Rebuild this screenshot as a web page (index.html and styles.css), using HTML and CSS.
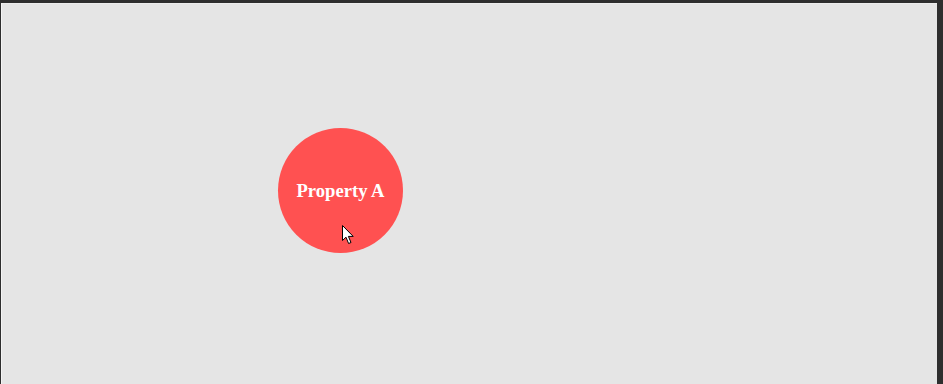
FILE: index.html
```html
<!DOCTYPE html>
<html lang="en">
<head>
    <meta charset="UTF-8">
    <title>Bubble</title>
    <link rel="stylesheet" href="styles.css">
</head>
<body>
    <div class="stage">
        <div class="node">
            <span>Property A</span>
        </div>
        <!-- mouse pointer -->
        <svg class="pointer" width="13" height="20" viewBox="0 0 13 20">
            <path d="M0.5 0.5 L0.5 15.5 L4 12.2 L6.6 18.5 L9 17.5 L6.4 11.4 L11.2 11.4 Z" fill="#fff" stroke="#000" stroke-width="1" stroke-linejoin="round"/>
        </svg>
    </div>
</body>
</html>
```

FILE: styles.css
```css
html, body {
    margin: 0;
    padding: 0;
    height: 100%;
    overflow: hidden;
}

body {
    background-color: #2e2e2e;
    font-family: "Liberation Serif", "Times New Roman", serif;
}

.stage {
    position: relative;
    box-sizing: border-box;
    margin: 3px 0 0 1px;
    width: 936px;
    height: 381px;
    background-color: #e5e5e5;
    border-left: 1px solid #f4f4f4;
    border-top: 1px solid #ececec;
}

.node {
    position: absolute;
    left: 276px;
    top: 124px;
    width: 125px;
    height: 125px;
    border-radius: 50%;
    background-color: #ff5151;
    display: flex;
    justify-content: center;
    align-items: center;
    color: #fff;
    font-weight: bold;
    font-size: 18.6px;
}

.pointer {
    position: absolute;
    left: 340px;
    top: 221px;
}
```
